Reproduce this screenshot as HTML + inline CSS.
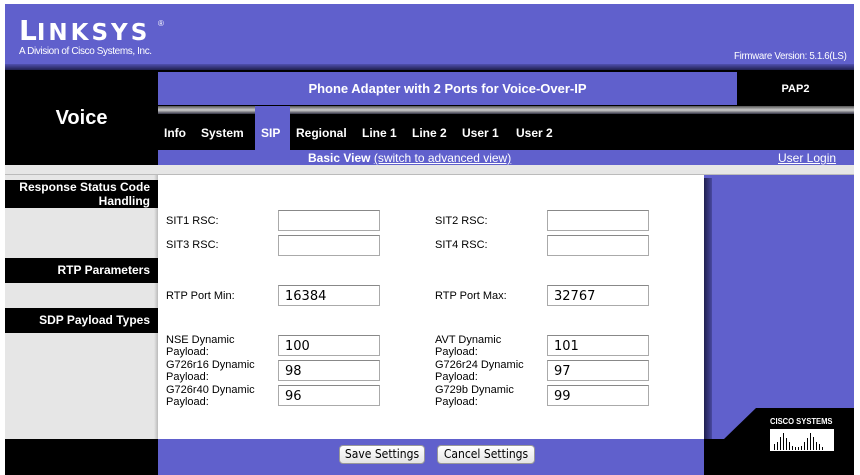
<!DOCTYPE html>
<html><head><style>
body{margin:0;width:860px;height:475px;background:#fff;position:relative;overflow:hidden;font-family:"Liberation Sans",Arial,sans-serif}
div{position:absolute;box-sizing:border-box}
.p{background:#6060cc}.b{background:#000}
.w{color:#fff;font-weight:bold}
.lbl{font-size:11px;color:#000;line-height:12px}
.in{background:#fff;border:1px solid #aaa;border-top-color:#888;width:102px;height:21px;font-size:13px;padding:3px 0 0 6px;font-family:"DejaVu Sans",sans-serif}
.sec{background:#000;color:#fff;font-weight:bold;font-size:12px;text-align:right;padding-right:8px;left:5px;width:153px}
.btn{background:linear-gradient(#fff,#e4e4e4);border:1px solid #999;border-radius:4px;font-size:12px;text-align:center;height:19px;line-height:17px;top:445px;font-family:"DejaVu Sans Condensed","DejaVu Sans",sans-serif}
</style></head><body>
<div class="p" style="left:5px;top:4px;width:849px;height:64px"></div>
<div style="left:5px;top:64px;width:849px;height:6px;background:linear-gradient(#5050b0,#202050)"></div>
<div class="w" style="left:19px;top:14px;font-size:28px;font-family:'DejaVu Sans',sans-serif;white-space:nowrap">L<span style="font-size:23px;letter-spacing:3px">INKSYS</span></div>
<div style="left:158px;top:19px;font-size:8px;color:#fff">®</div>
<div style="left:19px;top:45px;font-size:10.5px;color:#fff;letter-spacing:-0.4px;transform:scaleX(0.95);transform-origin:left">A Division of Cisco Systems, Inc.</div>
<div style="left:734px;top:51px;font-size:9.7px;color:#fff;letter-spacing:-0.3px">Firmware Version: 5.1.6(LS)</div>
<div class="b" style="left:5px;top:70px;width:849px;height:95px"></div>
<div class="w" style="left:5px;top:107px;width:153px;text-align:center;font-size:20px">Voice</div>
<div class="p" style="left:158px;top:72px;width:579px;height:33px"></div>
<div class="w" style="left:158px;top:81px;width:579px;text-align:center;font-size:13px">Phone Adapter with 2 Ports for Voice-Over-IP</div>
<div class="w" style="left:737px;top:83px;width:117px;text-align:center;font-size:11px">PAP2</div>
<div style="left:158px;top:106px;width:696px;height:8px;background:linear-gradient(#555,#ccc,#334)"></div>
<div class="p" style="left:255px;top:106px;width:35px;height:44px"></div>
<div class="w" style="left:164px;top:126px;font-size:12px">Info</div>
<div class="w" style="left:201px;top:126px;font-size:12px">System</div>
<div class="w" style="left:261px;top:126px;font-size:12px">SIP</div>
<div class="w" style="left:296px;top:126px;font-size:12px">Regional</div>
<div class="w" style="left:362px;top:126px;font-size:12px">Line 1</div>
<div class="w" style="left:412px;top:126px;font-size:12px">Line 2</div>
<div class="w" style="left:462px;top:126px;font-size:12px">User 1</div>
<div class="w" style="left:516px;top:126px;font-size:12px">User 2</div>
<div class="p" style="left:158px;top:150px;width:696px;height:15px"></div>
<div style="left:308px;top:151px;font-size:12px;color:#fff"><b>Basic View</b> <u>(switch to advanced view)</u></div>
<div style="left:778px;top:151px;font-size:12px;color:#fff"><u>User Login</u></div>
<div style="left:5px;top:165px;width:849px;height:10px;background:#e6e6e6;border-bottom:1px solid #bbb"></div>
<div style="left:5px;top:175px;width:153px;height:264px;background:#e6e6e6"></div>
<div style="left:154px;top:175px;width:4px;height:264px;background:linear-gradient(90deg,#e6e6e6,#bbb)"></div>
<div style="left:158px;top:175px;width:546px;height:264px;background:#fff"></div>
<div class="p" style="left:704px;top:175px;width:150px;height:264px"></div>
<div style="left:704px;top:178px;width:8px;height:261px;background:linear-gradient(90deg,#202050,#4848a0)"></div>
<div class="sec" style="top:180px;height:28px;line-height:14px">Response Status Code<br>Handling</div>
<div class="sec" style="top:258px;height:25px;line-height:24px">RTP Parameters</div>
<div class="sec" style="top:308px;height:25px;line-height:24px">SDP Payload Types</div>
<div class="lbl" style="left:166px;top:215px">SIT1 RSC:</div><div class="in" style="left:278px;top:210px"></div>
<div class="lbl" style="left:166px;top:239px">SIT3 RSC:</div><div class="in" style="left:278px;top:235px"></div>
<div class="lbl" style="left:435px;top:215px">SIT2 RSC:</div><div class="in" style="left:547px;top:210px"></div>
<div class="lbl" style="left:435px;top:239px">SIT4 RSC:</div><div class="in" style="left:547px;top:235px"></div>
<div class="lbl" style="left:166px;top:290px">RTP Port Min:</div><div class="in" style="left:278px;top:285px">16384</div>
<div class="lbl" style="left:435px;top:290px">RTP Port Max:</div><div class="in" style="left:547px;top:285px">32767</div>
<div class="lbl" style="left:166px;top:334px">NSE Dynamic<br>Payload:</div><div class="in" style="left:278px;top:335px">100</div>
<div class="lbl" style="left:166px;top:359px">G726r16 Dynamic<br>Payload:</div><div class="in" style="left:278px;top:360px">98</div>
<div class="lbl" style="left:166px;top:384px">G726r40 Dynamic<br>Payload:</div><div class="in" style="left:278px;top:385px">96</div>
<div class="lbl" style="left:435px;top:334px">AVT Dynamic<br>Payload:</div><div class="in" style="left:547px;top:335px">101</div>
<div class="lbl" style="left:435px;top:359px">G726r24 Dynamic<br>Payload:</div><div class="in" style="left:547px;top:360px">97</div>
<div class="lbl" style="left:435px;top:384px">G729b Dynamic<br>Payload:</div><div class="in" style="left:547px;top:385px">99</div>
<div class="b" style="left:5px;top:439px;width:153px;height:36px"></div>
<div class="p" style="left:158px;top:439px;width:546px;height:36px"></div>
<svg style="position:absolute;left:704px;top:408px" width="150" height="67"><polygon points="0,31 20,31 52,0 150,0 150,67 0,67" fill="#000"/></svg>
<div style="left:770px;top:417px;font-size:8px;color:#fff;font-weight:bold;transform:scaleX(0.95);transform-origin:left">CISCO SYSTEMS</div>
<svg style="position:absolute;left:770px;top:429px" width="68" height="26"><rect width="64" height="22" fill="#fff"/><g fill="#000"><rect x="4" y="15" width="1" height="6"/><rect x="7" y="13" width="1" height="8"/><rect x="10" y="8" width="1" height="13"/><rect x="13" y="4" width="1" height="17"/><rect x="16" y="9" width="1" height="12"/><rect x="19" y="13" width="1" height="8"/><rect x="22" y="17" width="1" height="4"/><rect x="25" y="18" width="1" height="3"/><rect x="28" y="18" width="1" height="3"/><rect x="31" y="17" width="1" height="4"/><rect x="34" y="13" width="1" height="8"/><rect x="37" y="9" width="1" height="12"/><rect x="40" y="4" width="1" height="17"/><rect x="43" y="8" width="1" height="13"/><rect x="46" y="13" width="1" height="8"/><rect x="49" y="15" width="1" height="6"/><rect x="52" y="18" width="1" height="3"/></g></svg>
<div class="btn" style="left:339px;width:86px">Save Settings</div>
<div class="btn" style="left:437px;width:98px">Cancel Settings</div>
</body></html>
